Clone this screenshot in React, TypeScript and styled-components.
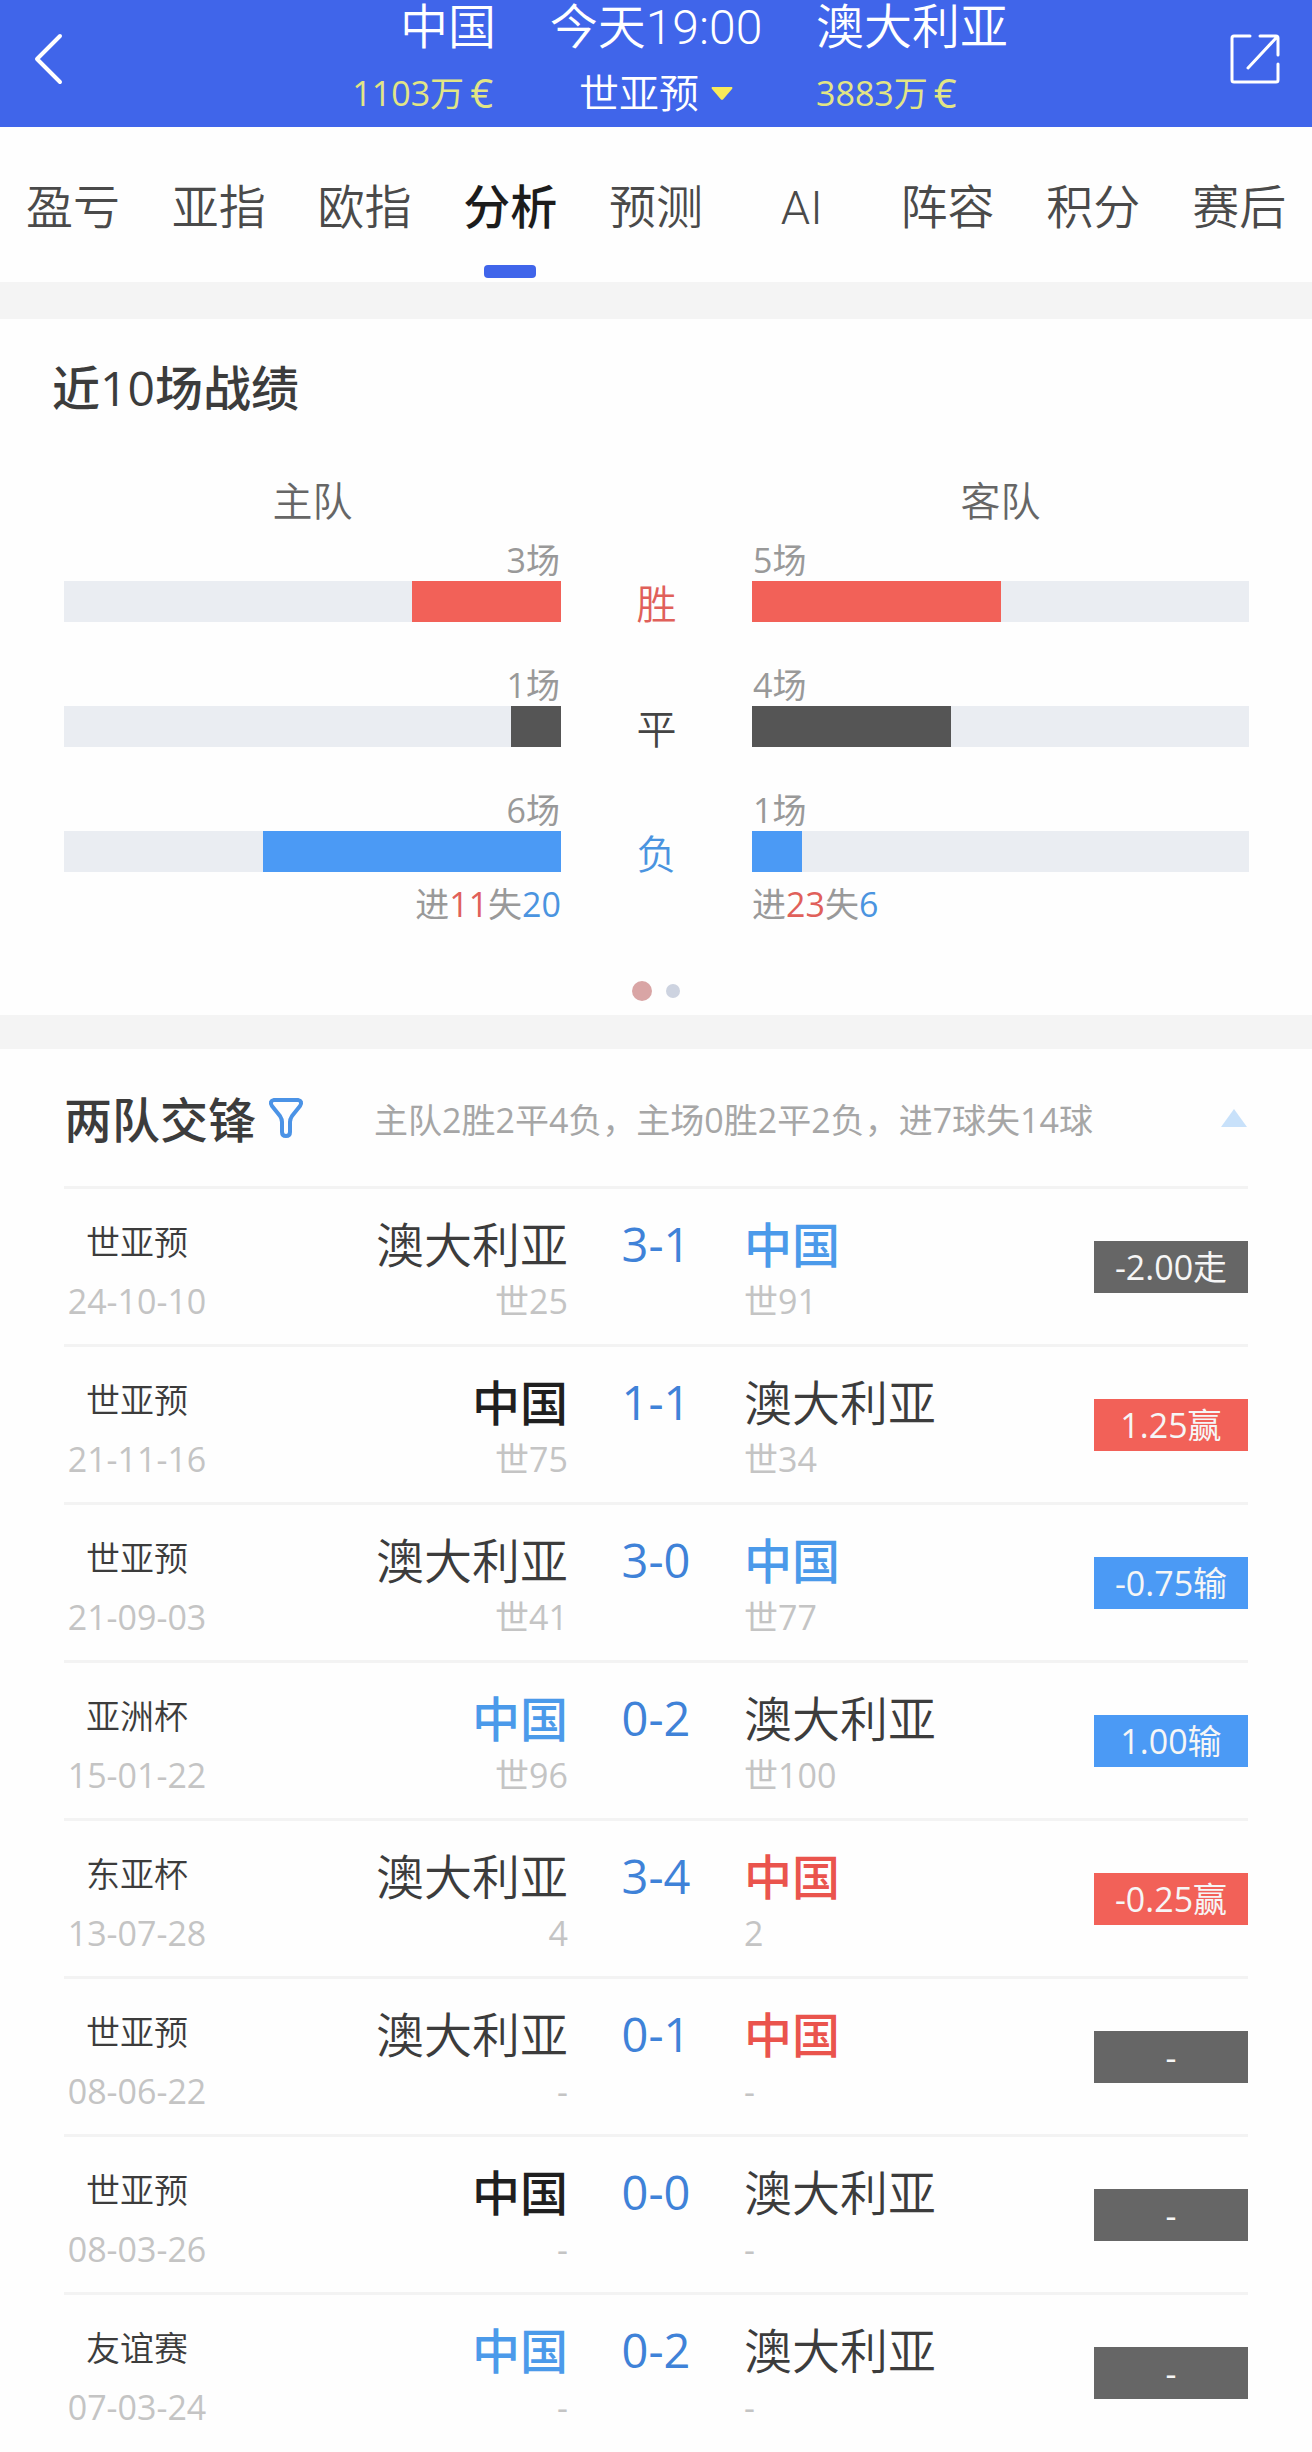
import React, { useState } from 'react';
import styled, { createGlobalStyle } from 'styled-components';

const color = {
  brand: '#4065ea',
  red: '#f26158',
  blue: '#4b9af5',
  dark: '#555555',
  ink: '#3c3c3c',
  track: '#eaedf2',
  band: '#f4f4f4',
  line: '#f3f3f3',
  yellow: '#e2e585',
};

const GlobalStyle = createGlobalStyle`
  * { box-sizing: border-box; }
  body {
    margin: 0;
    background: #fefefe;
    color: ${color.ink};
    font-family: "Open Sans", "Noto Sans CJK SC", sans-serif;
    font-weight: 400;
  }
  button, select {
    margin: 0;
    padding: 0;
    border: 0;
    background: none;
    color: inherit;
    font: inherit;
    cursor: pointer;
  }
  h2, p { margin: 0; }
  a { color: inherit; text-decoration: none; }
`;

const Page = styled.div`
  display: flex;
  flex-direction: column;
  border-bottom: 1px solid #a3a3a3;
`;

/* ---------- match header ---------- */

const Header = styled.header`
  display: grid;
  grid-template-columns: 1fr 320px 1fr;
  padding-bottom: 9px;
  background: ${color.brand};
  color: #fff;
  font-weight: 350;
`;

const Side = styled.div`
  display: flex;
  justify-content: space-between;
`;

const HeadColumn = styled.div<{ $align: string }>`
  display: flex;
  flex-direction: column;
  align-items: ${(p) => p.$align};
  gap: 12px;
`;

const HeadTitle = styled.div`
  font-family: Roboto, "Noto Sans CJK SC", sans-serif;
  font-size: 48px;
  line-height: 56px;
  white-space: nowrap;
`;

const Value = styled.div`
  display: flex;
  align-items: center;
  gap: 6px;
  padding-right: 3px;
  font-size: 34px;
  line-height: 50px;
  font-weight: 400;
  color: ${color.yellow};
`;

const Euro = styled.span`
  font-size: 40px;
`;

const IconButton = styled.button`
  display: flex;
  align-items: center;
  padding: 0 32px;
`;

const LeaguePicker = styled.label`
  display: flex;
  align-items: center;
  gap: 12px;
  font-size: 40px;
  line-height: 50px;
`;

const LeagueSelect = styled.select`
  appearance: none;
  height: 50px;
  line-height: 50px;
  outline: none;
`;

/* ---------- tabs ---------- */

const Tabs = styled.nav`
  display: flex;
  padding: 52px 0 4px;
`;

const Tab = styled.a<{ $active: boolean }>`
  flex: 1;
  display: flex;
  flex-direction: column;
  align-items: center;
  gap: 28px;
  font-family: Roboto, "Noto Sans CJK SC", sans-serif;
  font-size: 47px;
  line-height: 58px;
  white-space: nowrap;
  color: ${(p) => (p.$active ? '#1c1c1c' : '#4a4a4a')};
  font-weight: ${(p) => (p.$active ? 500 : 350)};

  &::after {
    content: '';
    width: 52px;
    height: 13px;
    border-radius: 4px;
    background: ${(p) => (p.$active ? color.brand : 'transparent')};
  }
`;

const Band = styled.div<{ $size: number }>`
  height: ${(p) => p.$size}px;
  background: ${color.band};
`;

const Heading = styled.h2`
  font-size: 48px;
  line-height: 58px;
  font-weight: 500;
  white-space: nowrap;
`;

/* ---------- recent form ---------- */

const FormSection = styled.section`
  padding: 40px 52px 14px;
`;

const Chart = styled.div`
  margin: 60px 11px 0 12px;
`;

const Columns = styled.div`
  display: grid;
  grid-template-columns: 1fr 191px 1fr;
`;

const TeamRole = styled.div`
  text-align: center;
  font-size: 40px;
  line-height: 48px;
  font-weight: 350;
  color: #666;
`;

const BarRows = styled.div`
  display: flex;
  flex-direction: column;
  gap: 43px;
  margin-top: 15px;
`;

const BarCell = styled.div`
  display: flex;
  flex-direction: column;
  gap: 1px;
`;

const SmallText = styled.div<{ $end?: boolean }>`
  font-size: 34px;
  line-height: 40px;
  color: #999;
  text-align: ${(p) => (p.$end ? 'right' : 'left')};
`;

const CountText = styled(SmallText)`
  padding: 0 1px;
`;

const Track = styled.div<{ $end: boolean }>`
  display: flex;
  justify-content: ${(p) => (p.$end ? 'flex-end' : 'flex-start')};
  height: 41px;
  background: ${color.track};
`;

const Fill = styled.div<{ $color: string }>`
  background: ${(p) => p.$color};
`;

const Outcome = styled.div<{ $color: string }>`
  align-self: end;
  text-align: center;
  font-size: 40px;
  line-height: 37px;
  font-weight: 350;
  color: ${(p) => p.$color};
`;

const Goals = styled(Columns)`
  margin-top: 12px;
`;

const Tint = styled.span<{ $color: string }>`
  color: ${(p) => p.$color};
`;

const Dots = styled.div`
  display: flex;
  justify-content: center;
  align-items: center;
  gap: 14px;
  height: 20px;
  margin-top: 57px;
`;

const Dot = styled.button<{ $active: boolean }>`
  width: ${(p) => (p.$active ? 20 : 14)}px;
  height: ${(p) => (p.$active ? 20 : 14)}px;
  border-radius: 50%;
  background: ${(p) => (p.$active ? '#d9a5a5' : '#cdd3e0')};
`;

/* ---------- head to head ---------- */

const DuelSection = styled.section`
  padding: 0 64px;
`;

const DuelHead = styled.div`
  display: flex;
  align-items: center;
  height: 137px;
  padding-top: 4px;
`;

const FilterButton = styled.button`
  display: flex;
  margin: 0 70px 4px 12px;
`;

const Summary = styled.p`
  flex: 1;
  font-size: 34px;
  line-height: 58px;
  color: #a6a6a6;
  white-space: nowrap;
`;

const CollapseButton = styled.button`
  display: flex;
  margin-bottom: 4px;
`;

const Table = styled.table`
  width: 100%;
  table-layout: fixed;
  border-collapse: collapse;
`;

const EdgeCol = styled.col`
  width: 154px;
`;

const ScoreCol = styled.col`
  width: 176px;
`;

const Row = styled.tr`
  height: 158px;
  border-top: 3px solid ${color.line};
`;

const Cell = styled.td<{ $align: string }>`
  padding: 27px 0 0;
  vertical-align: top;
  text-align: ${(p) => p.$align};
  white-space: nowrap;
`;

const LeagueCell = styled(Cell)`
  padding-right: 8px;
`;

const BadgeCell = styled.td`
  padding: 0;
  vertical-align: middle;
`;

const League = styled.div`
  padding-bottom: 6px;
  font-size: 34px;
  line-height: 52px;
  font-weight: 350;
`;

const Muted = styled.div`
  font-size: 34px;
  line-height: 54px;
  color: #c4c4c4;
`;

const Team = styled.div<{ $tone: string; $strong: boolean }>`
  font-size: 48px;
  line-height: 58px;
  color: ${(p) => p.$tone};
  font-weight: ${(p) => (p.$strong ? 500 : 350)};
`;

const Score = styled.div`
  font-size: 47px;
  line-height: 56px;
  color: #3f82d8;
`;

const Badge = styled.div<{ $color: string }>`
  height: 52px;
  font-size: 34px;
  line-height: 52px;
  text-align: center;
  color: #f6f6f6;
  background: ${(p) => p.$color};
`;

/* ---------- data ---------- */

const tabs = ['盈亏', '亚指', '欧指', '分析', '预测', 'AI', '阵容', '积分', '赛后'];

const outcomes = [
  { label: '胜', home: 3, away: 5, fill: color.red, text: '#e0605a' },
  { label: '平', home: 1, away: 4, fill: color.dark, text: '#444' },
  { label: '负', home: 6, away: 1, fill: color.blue, text: '#4a94e0' },
];

type Result = 'win' | 'lose' | 'draw';
const tone: Record<Result, string> = { win: '#ea544d', lose: '#4b9aea', draw: '#1f1f1f' };
const grey = '#666666';

interface Match {
  league: string;
  date: string;
  home: string;
  away: string;
  score: string;
  homeRank: string;
  awayRank: string;
  result: Result;
  odds: string;
  badge: string;
}

const CN = '中国';
const AU = '澳大利亚';

const matches: Match[] = [
  { league: '世亚预', date: '24-10-10', home: AU, away: CN, score: '3-1', homeRank: '世25', awayRank: '世91', result: 'lose', odds: '-2.00走', badge: grey },
  { league: '世亚预', date: '21-11-16', home: CN, away: AU, score: '1-1', homeRank: '世75', awayRank: '世34', result: 'draw', odds: '1.25赢', badge: color.red },
  { league: '世亚预', date: '21-09-03', home: AU, away: CN, score: '3-0', homeRank: '世41', awayRank: '世77', result: 'lose', odds: '-0.75输', badge: color.blue },
  { league: '亚洲杯', date: '15-01-22', home: CN, away: AU, score: '0-2', homeRank: '世96', awayRank: '世100', result: 'lose', odds: '1.00输', badge: color.blue },
  { league: '东亚杯', date: '13-07-28', home: AU, away: CN, score: '3-4', homeRank: '4', awayRank: '2', result: 'win', odds: '-0.25赢', badge: color.red },
  { league: '世亚预', date: '08-06-22', home: AU, away: CN, score: '0-1', homeRank: '-', awayRank: '-', result: 'win', odds: '-', badge: grey },
  { league: '世亚预', date: '08-03-26', home: CN, away: AU, score: '0-0', homeRank: '-', awayRank: '-', result: 'draw', odds: '-', badge: grey },
  { league: '友谊赛', date: '07-03-24', home: CN, away: AU, score: '0-2', homeRank: '-', awayRank: '-', result: 'lose', odds: '-', badge: grey },
];

/* ---------- pieces ---------- */

function TeamName({ name, result }: { name: string; result: Result }) {
  const own = name === CN;
  return (
    <Team $tone={own ? tone[result] : color.ink} $strong={own}>
      {name}
    </Team>
  );
}

function FormBar({ count, fill, end }: { count: number; fill: string; end: boolean }) {
  return (
    <BarCell>
      <CountText $end={end}>{count}场</CountText>
      <Track $end={end}>
        <Fill $color={fill} style={{ width: `${count * 10}%` }} />
      </Track>
    </BarCell>
  );
}

function GoalLine({ scored, lost, end }: { scored: number; lost: number; end: boolean }) {
  return (
    <SmallText $end={end}>
      进<Tint $color="#e0605a">{scored}</Tint>失<Tint $color="#4a94e0">{lost}</Tint>
    </SmallText>
  );
}

export default function App() {
  const [active, setActive] = useState('分析');
  const [slide, setSlide] = useState(0);
  const [open, setOpen] = useState(true);

  return (
    <Page>
      <GlobalStyle />
      <Header>
        <Side>
          <IconButton aria-label="返回">
            <svg width="32" height="52" viewBox="0 0 32 52" fill="none" stroke="#fff" strokeWidth="4" strokeLinecap="round" strokeLinejoin="round">
              <path d="M28 3 5 26 28 49" />
            </svg>
          </IconButton>
          <HeadColumn $align="flex-end">
            <HeadTitle>中国</HeadTitle>
            <Value>1103万<Euro>€</Euro></Value>
          </HeadColumn>
        </Side>
        <HeadColumn $align="center">
          <HeadTitle>今天19:00</HeadTitle>
          <LeaguePicker>
            <LeagueSelect aria-label="赛事">
              <option>世亚预</option>
            </LeagueSelect>
            <svg width="22" height="13" viewBox="0 0 22 13">
              <path d="M1 0H21Q22 1 21 2L12 12.4Q11 13 10 12.4L1 2Q0 1 1 0Z" fill="#f8ea5a" />
            </svg>
          </LeaguePicker>
        </HeadColumn>
        <Side>
          <HeadColumn $align="flex-start">
            <HeadTitle>澳大利亚</HeadTitle>
            <Value>3883万<Euro>€</Euro></Value>
          </HeadColumn>
          <IconButton aria-label="分享">
            <svg width="50" height="50" viewBox="0 0 50 50" fill="none" stroke="#fff" strokeWidth="3" strokeLinecap="round" strokeLinejoin="round">
              <path d="M20 2H4Q2 2 2 4V46Q2 48 4 48H46Q48 48 48 46V30" />
              <path d="M30 2H46Q48 2 48 4V21M46 4 18 34" />
            </svg>
          </IconButton>
        </Side>
      </Header>

      <Tabs>
        {tabs.map((t) => (
          <Tab key={t} href="#" $active={t === active} onClick={() => setActive(t)}>
            {t}
          </Tab>
        ))}
      </Tabs>
      <Band $size={37} />

      <FormSection>
        <Heading>近10场战绩</Heading>
        <Chart>
          <Columns>
            <TeamRole>主队</TeamRole>
            <span />
            <TeamRole>客队</TeamRole>
          </Columns>
          <BarRows>
            {outcomes.map((o) => (
              <Columns key={o.label}>
                <FormBar count={o.home} fill={o.fill} end />
                <Outcome $color={o.text}>{o.label}</Outcome>
                <FormBar count={o.away} fill={o.fill} end={false} />
              </Columns>
            ))}
          </BarRows>
          <Goals>
            <GoalLine scored={11} lost={20} end />
            <span />
            <GoalLine scored={23} lost={6} end={false} />
          </Goals>
        </Chart>
        <Dots>
          {[0, 1].map((i) => (
            <Dot key={i} $active={i === slide} aria-label={`第${i + 1}页`} onClick={() => setSlide(i)} />
          ))}
        </Dots>
      </FormSection>
      <Band $size={34} />

      <DuelSection>
        <DuelHead>
          <Heading>两队交锋</Heading>
          <FilterButton aria-label="筛选">
            <svg width="36" height="40" viewBox="0 0 36 40" fill="none" stroke="#4b93e6" strokeWidth="4" strokeLinejoin="round">
              <path d="M6 2H30Q35 3 32 8L24 18Q22 21 22 24V34Q22 38 18 38T14 34V24Q14 21 12 18L4 8Q1 3 6 2Z" />
            </svg>
          </FilterButton>
          <Summary>主队2胜2平4负，主场0胜2平2负，进7球失14球</Summary>
          <CollapseButton aria-label="收起" onClick={() => setOpen(!open)}>
            <svg width="28" height="18" viewBox="0 0 28 18">
              <path d="M14 0 27 18H1Z" fill="#c8e1fa" />
            </svg>
          </CollapseButton>
        </DuelHead>
        {open && (
          <Table>
            <colgroup>
              <EdgeCol />
              <col />
              <ScoreCol />
              <col />
              <EdgeCol />
            </colgroup>
            <tbody>
              {matches.map((m) => (
                <Row key={m.date}>
                  <LeagueCell $align="center">
                    <League>{m.league}</League>
                    <Muted>{m.date}</Muted>
                  </LeagueCell>
                  <Cell $align="right">
                    <TeamName name={m.home} result={m.result} />
                    <Muted>{m.homeRank}</Muted>
                  </Cell>
                  <Cell $align="center">
                    <Score>{m.score}</Score>
                  </Cell>
                  <Cell $align="left">
                    <TeamName name={m.away} result={m.result} />
                    <Muted>{m.awayRank}</Muted>
                  </Cell>
                  <BadgeCell>
                    <Badge $color={m.badge}>{m.odds}</Badge>
                  </BadgeCell>
                </Row>
              ))}
            </tbody>
          </Table>
        )}
      </DuelSection>
    </Page>
  );
}
